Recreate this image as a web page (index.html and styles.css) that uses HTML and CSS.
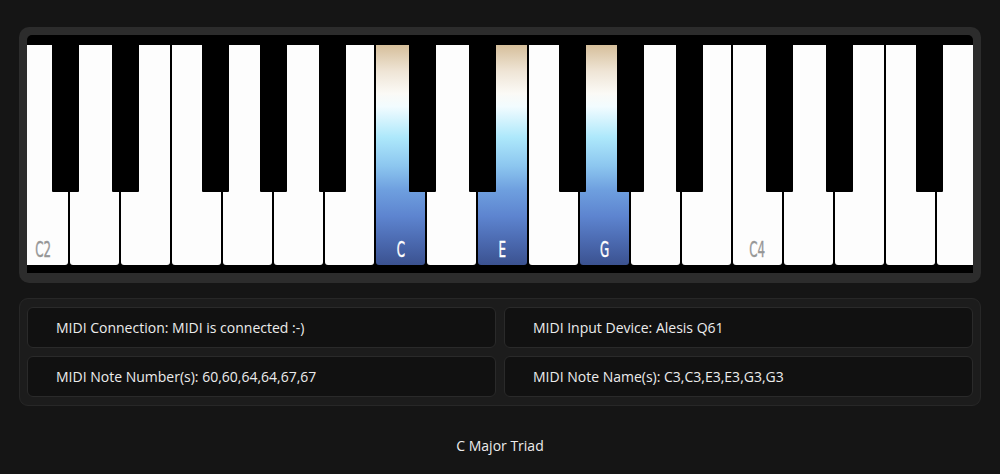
FILE: index.html
```html
<!DOCTYPE html>
<html lang="en">
<head>
<meta charset="utf-8">
<title>MIDI Piano</title>
<link rel="stylesheet" href="styles.css">
</head>
<body>
<main class="app">
  <section class="keyboard-panel">
    <div class="keyboard">
      <div class="keys">
        <div class="white"><span class="label">C2</span><div class="black cs"></div></div>
        <div class="white"><div class="black ds"></div></div>
        <div class="white"></div>
        <div class="white"><div class="black fs"></div></div>
        <div class="white"><div class="black gs"></div></div>
        <div class="white"><div class="black as"></div></div>
        <div class="white"></div>

        <div class="white on"><span class="label">C</span><div class="black cs"></div></div>
        <div class="white"><div class="black ds"></div></div>
        <div class="white on"><span class="label">E</span></div>
        <div class="white"><div class="black fs"></div></div>
        <div class="white on"><span class="label">G</span><div class="black gs"></div></div>
        <div class="white"><div class="black as"></div></div>
        <div class="white"></div>

        <div class="white"><span class="label">C4</span><div class="black cs"></div></div>
        <div class="white"><div class="black ds"></div></div>
        <div class="white"></div>
        <div class="white"><div class="black fs"></div></div>
        <div class="white"><div class="black gs"></div></div>
        <div class="white"><div class="black as"></div></div>
        <div class="white"></div>
      </div>
    </div>
  </section>

  <section class="info-panel">
    <div class="cell">MIDI Connection: MIDI is connected :-)</div>
    <div class="cell">MIDI Input Device: Alesis Q61</div>
    <div class="cell">MIDI Note Number(s): 60,60,64,64,67,67</div>
    <div class="cell">MIDI Note Name(s): C3,C3,E3,E3,G3,G3</div>
  </section>

  <p class="chord">C Major Triad</p>
</main>
</body>
</html>
```

FILE: styles.css
```css
* { box-sizing: border-box; }

html, body {
  margin: 0;
  background: #151515;
  color: #ececec;
  font-family: "Open Sans", "Noto Sans", sans-serif;
}

.app {
  padding: 27px 19px 0;
}

.keyboard-panel {
  background: #2c2c2c;
  border-radius: 10px;
  padding: 8px 8px 10px;
}

.keyboard {
  background: #000;
  border-radius: 5px 5px 0 0;
  overflow: hidden;
  padding: 10px 0 8px;
}

.keys {
  display: flex;
  gap: 2px;
  margin-left: -8px;
  height: 220px;
}

.white {
  position: relative;
  flex: 0 0 49px;
  height: 100%;
  background: #fdfdfd;
  border-radius: 0 0 3px 3px;
  display: flex;
  align-items: flex-end;
  justify-content: center;
  padding-bottom: 4px;
}

.white.on {
  background: linear-gradient(to bottom,
    #d6bf9b 0%,
    #efe5d6 12%,
    #fbfaf6 22%,
    #f2fcff 28%,
    #ade8fb 42%,
    #8cc6ef 55%,
    #6e9fdf 66%,
    #5d84cf 78%,
    #4a68ae 90%,
    #3b5290 100%);
}

.label {
  font-family: "DejaVu Sans Condensed", "DejaVu Sans", sans-serif;
  font-stretch: condensed;
  font-size: 22px;
  line-height: 22px;
  color: #969696;
  display: inline-block;
  transform: scaleX(0.6);
  -webkit-text-stroke: 0.4px currentColor;
}

.white.on .label {
  color: #fff;
}

.black {
  position: absolute;
  z-index: 2;
  top: -10px;
  width: 27px;
  height: 157px;
  background: #000;
  border-radius: 0 0 1px 1px;
}

.black.cs { left: 33px; }
.black.ds { left: 42px; }
.black.fs { left: 30px; }
.black.gs { left: 37px; }
.black.as { left: 45px; }

.info-panel {
  margin-top: 15px;
  background: #1c1c1c;
  border: 1px solid #272727;
  border-radius: 9px;
  padding: 8px 7px;
  display: grid;
  grid-template-columns: 1fr 1fr;
  gap: 8px;
}

.cell {
  background: #111;
  border: 1px solid #2a2a2a;
  border-radius: 6px;
  height: 41px;
  display: flex;
  align-items: center;
  padding-left: 28px;
  font-size: 14px;
  color: #ececec;
}

.chord {
  margin: 30px 0 0;
  text-align: center;
  font-size: 14px;
  color: #ececec;
}
```
